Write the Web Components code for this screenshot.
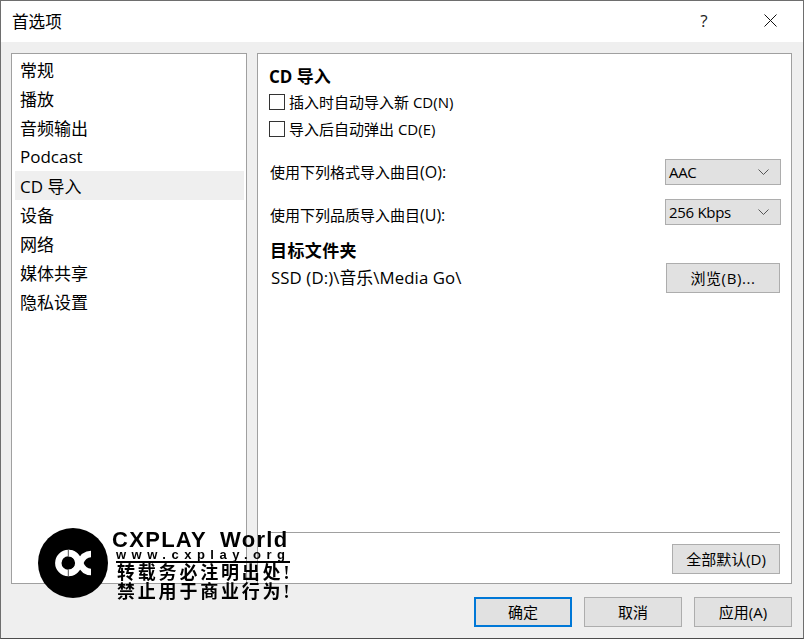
<!DOCTYPE html>
<html>
<head>
<meta charset="utf-8">
<style>
  html, body { margin: 0; height: 100%; }
  body {
    width: 804px;
    height: 639px;
    overflow: hidden;
    font-family: "Open Sans", "Noto Sans CJK SC", sans-serif;
  }
</style>
</head>
<body>
<pref-dialog>
  <span slot="title">首选项</span>
  <nav-list slot="nav">
    <nav-item>常规</nav-item>
    <nav-item>播放</nav-item>
    <nav-item>音频输出</nav-item>
    <nav-item>Podcast</nav-item>
    <nav-item selected>CD 导入</nav-item>
    <nav-item>设备</nav-item>
    <nav-item>网络</nav-item>
    <nav-item>媒体共享</nav-item>
    <nav-item>隐私设置</nav-item>
  </nav-list>
  <cd-panel slot="panel"></cd-panel>
  <win-button slot="actions" focused>确定</win-button>
  <win-button slot="actions">取消</win-button>
  <win-button slot="actions">应用(A)</win-button>
  <water-mark slot="overlay"></water-mark>
</pref-dialog>

<script>
class PrefDialog extends HTMLElement {
  constructor() {
    super();
    this.attachShadow({ mode: "open" });
    this.shadowRoot.innerHTML = `
      <style>
        :host {
          display: flex;
          flex-direction: column;
          position: relative;
          box-sizing: border-box;
          width: 804px;
          height: 639px;
          background: #efefef;
          border: 1px solid #6e6e6e;
          border-bottom-color: #4c4c4c;
          color: #000;
        }
        header {
          display: flex;
          align-items: center;
          box-sizing: border-box;
          height: 41px;
          flex: none;
          background: #fff;
          padding: 0 0 2px 11px;
          font-size: 16.6px;
        }
        .title { flex: 1; }
        .help {
          width: 66px;
          text-align: center;
          font-size: 17px;
          color: #222;
        }
        .close {
          width: 66px;
          display: flex;
          justify-content: center;
        }
        main {
          display: flex;
          gap: 10px;
          height: 531px;
          margin: 11px 11px 0 10px;
        }
        .box {
          box-sizing: border-box;
          border: 1px solid #a0a0a0;
          background: #fff;
        }
        .left { width: 236px; flex: none; padding: 1px 2px 0 3px; }
        .right { flex: 1; }
        footer {
          display: flex;
          justify-content: flex-end;
          gap: 12px;
          margin: 13px 11px 0 0;
        }
      </style>
      <header>
        <span class="title"><slot name="title"></slot></span>
        <span class="help">?</span>
        <span class="close">
          <svg width="13" height="13" viewBox="0 0 13 13"><path d="M.5.5l12 12M12.5.5l-12 12" stroke="#111" stroke-width="1" fill="none"/></svg>
        </span>
      </header>
      <main>
        <div class="box left"><slot name="nav"></slot></div>
        <div class="box right"><slot name="panel"></slot></div>
      </main>
      <footer><slot name="actions"></slot></footer>
      <slot name="overlay"></slot>
    `;
  }
}
customElements.define("pref-dialog", PrefDialog);

class NavList extends HTMLElement {
  constructor() {
    super();
    this.attachShadow({ mode: "open" });
    this.shadowRoot.innerHTML = `
      <style>
        :host { display: flex; flex-direction: column; }
      </style>
      <slot></slot>
    `;
  }
}
customElements.define("nav-list", NavList);

class NavItem extends HTMLElement {
  constructor() {
    super();
    this.attachShadow({ mode: "open" });
    this.shadowRoot.innerHTML = `
      <style>
        :host {
          display: flex;
          align-items: center;
          height: 29px;
          padding-left: 5px;
          font-size: 17px;
          white-space: nowrap;
        }
        :host([selected]) { background: #efefef; }
      </style>
      <slot></slot>
    `;
  }
}
customElements.define("nav-item", NavItem);

class WinButton extends HTMLElement {
  constructor() {
    super();
    this.attachShadow({ mode: "open" });
    this.shadowRoot.innerHTML = `
      <style>
        :host {
          display: flex;
          align-items: center;
          justify-content: center;
          box-sizing: border-box;
          width: 98px;
          height: 30px;
          padding-bottom: 2px;
          background: #e1e1e1;
          border: 1px solid #adadad;
          font-size: 15px;
          white-space: nowrap;
        }
        :host([focused]) { border: 2px solid #0078d7; }
      </style>
      <slot></slot>
    `;
  }
}
customElements.define("win-button", WinButton);

class WinCheck extends HTMLElement {
  constructor() {
    super();
    this.attachShadow({ mode: "open" });
    this.shadowRoot.innerHTML = `
      <style>
        :host {
          display: flex;
          align-items: center;
          gap: 4px;
          height: 27px;
          font-size: 15px;
          white-space: nowrap;
        }
        i {
          box-sizing: border-box;
          width: 16px;
          height: 16px;
          border: 1px solid #333;
          background: #fff;
        }
      </style>
      <i></i><span><slot></slot></span>
    `;
  }
}
customElements.define("win-check", WinCheck);

class WinSelect extends HTMLElement {
  constructor() {
    super();
    this.attachShadow({ mode: "open" });
    this.shadowRoot.innerHTML = `
      <style>
        :host {
          display: flex;
          align-items: center;
          justify-content: space-between;
          box-sizing: border-box;
          width: 116px;
          height: 26px;
          padding: 0 11px 0 3px;
          background: #e1e1e1;
          border: 1px solid #adadad;
          font-size: 15px;
          white-space: nowrap;
        }
        svg { display: block; }
        span { letter-spacing: -0.3px; }
      </style>
      <span><slot></slot></span>
      <svg width="11" height="6" viewBox="0 0 11 6"><path d="M.5.5l5 5 5-5" fill="none" stroke="#555"/></svg>
    `;
  }
}
customElements.define("win-select", WinSelect);

class CdPanel extends HTMLElement {
  constructor() {
    super();
    this.attachShadow({ mode: "open" });
    this.shadowRoot.innerHTML = `
      <style>
        :host {
          display: flex;
          flex-direction: column;
          box-sizing: border-box;
          height: 100%;
          padding: 11px 11px 9px 11px;
          font-size: 15px;
        }
        h2 {
          margin: 0;
          font-size: 17px;
          font-weight: 700;
          line-height: 23px;
        }
        .checks { display: flex; flex-direction: column; margin-bottom: 17px; }
        .row {
          display: flex;
          align-items: center;
          justify-content: space-between;
          height: 26px;
          margin-bottom: 14px;
          padding-left: 1px;
          white-space: nowrap;
        }
        .row b { font-weight: 400; font-size: 16px; }
        .low { margin-top: 6px; }
        .sel { margin-right: -1px; }
        h3 {
          margin: 0 0 0 1px;
          font-size: 17px;
          font-weight: 700;
          line-height: 24px;
          letter-spacing: 0.4px;
        }
        .path { font-size: 16.8px; height: 30px; margin: 0; padding-left: 2px; }
        .path span { margin-bottom: 2px; letter-spacing: 0.1px; }
        .path win-button { width: 114px; font-size: 15px; letter-spacing: 0.6px; }
        .grow { flex: 1; }
        hr {
          margin: 0;
          border: 0;
          border-top: 1px solid #a0a0a0;
        }
        .defaults { display: flex; justify-content: flex-end; margin-top: 11px; }
        .defaults win-button { width: 108px; }
      </style>
      <h2>CD 导入</h2>
      <div class="checks">
        <win-check>插入时自动导入新 CD(N)</win-check>
        <win-check>导入后自动弹出 CD(E)</win-check>
      </div>
      <div class="row"><span>使用下列格式导入曲目<b>(O):</b></span><win-select class="sel">AAC</win-select></div>
      <div class="row"><span class="low">使用下列品质导入曲目<b>(U):</b></span><win-select class="sel">256 Kbps</win-select></div>
      <h3>目标文件夹</h3>
      <div class="row path"><span>SSD (D:)\\音乐\\Media Go\\</span><win-button>浏览(B)...</win-button></div>
      <div class="grow"></div>
      <hr>
      <div class="defaults"><win-button>全部默认(D)</win-button></div>
    `;
  }
}
customElements.define("cd-panel", CdPanel);

class WaterMark extends HTMLElement {
  constructor() {
    super();
    this.attachShadow({ mode: "open" });
    this.shadowRoot.innerHTML = `
      <style>
        :host {
          position: absolute;
          left: 37px;
          top: 527px;
          display: flex;
          gap: 4px;
          color: #000;
          white-space: nowrap;
          filter: blur(0.3px);
        }
        svg { display: block; flex: none; }
        .txt { display: flex; flex-direction: column; width: 178px; }
        .big { font: 700 22px/24px "Liberation Sans", sans-serif; letter-spacing: 1.3px; word-spacing: 6px; }
        .url {
          font: 700 13px/11px "Liberation Sans", sans-serif;
          letter-spacing: 5.5px;
          margin: -3px 0 0 4px;
          border-bottom: 2px solid #000;
          padding-bottom: 1px;
        }
        .cn { font: 700 18px/19px "Liberation Serif", "Noto Sans CJK SC", serif; letter-spacing: 2.8px; margin-left: 5px; position: relative; top: 1px; }
      </style>
      <svg width="70" height="70" viewBox="0 0 70 70">
        <circle cx="35" cy="35" r="35" fill="#000"/>
        <g fill="none" stroke="#fff" stroke-width="6.4">
          <circle cx="30.3" cy="35" r="10"/>
          <path d="M30 25C38 25 40 31 42 35C44 40 47 44 53 44"/>
          <path d="M30 45C38 45 40 39 42 35C44 30 47 26 53 26"/>
        </g>
        <path d="M30.3 21.5v7M30.3 41.5v7" stroke="#000" stroke-width=".7"/>
      </svg>
      <div class="txt">
        <div class="big">CXPLAY World</div>
        <div class="url">www.cxplay.org</div>
        <div class="cn">转载务必注明出处!</div>
        <div class="cn">禁止用于商业行为!</div>
      </div>
    `;
  }
}
customElements.define("water-mark", WaterMark);
</script>
</body>
</html>
